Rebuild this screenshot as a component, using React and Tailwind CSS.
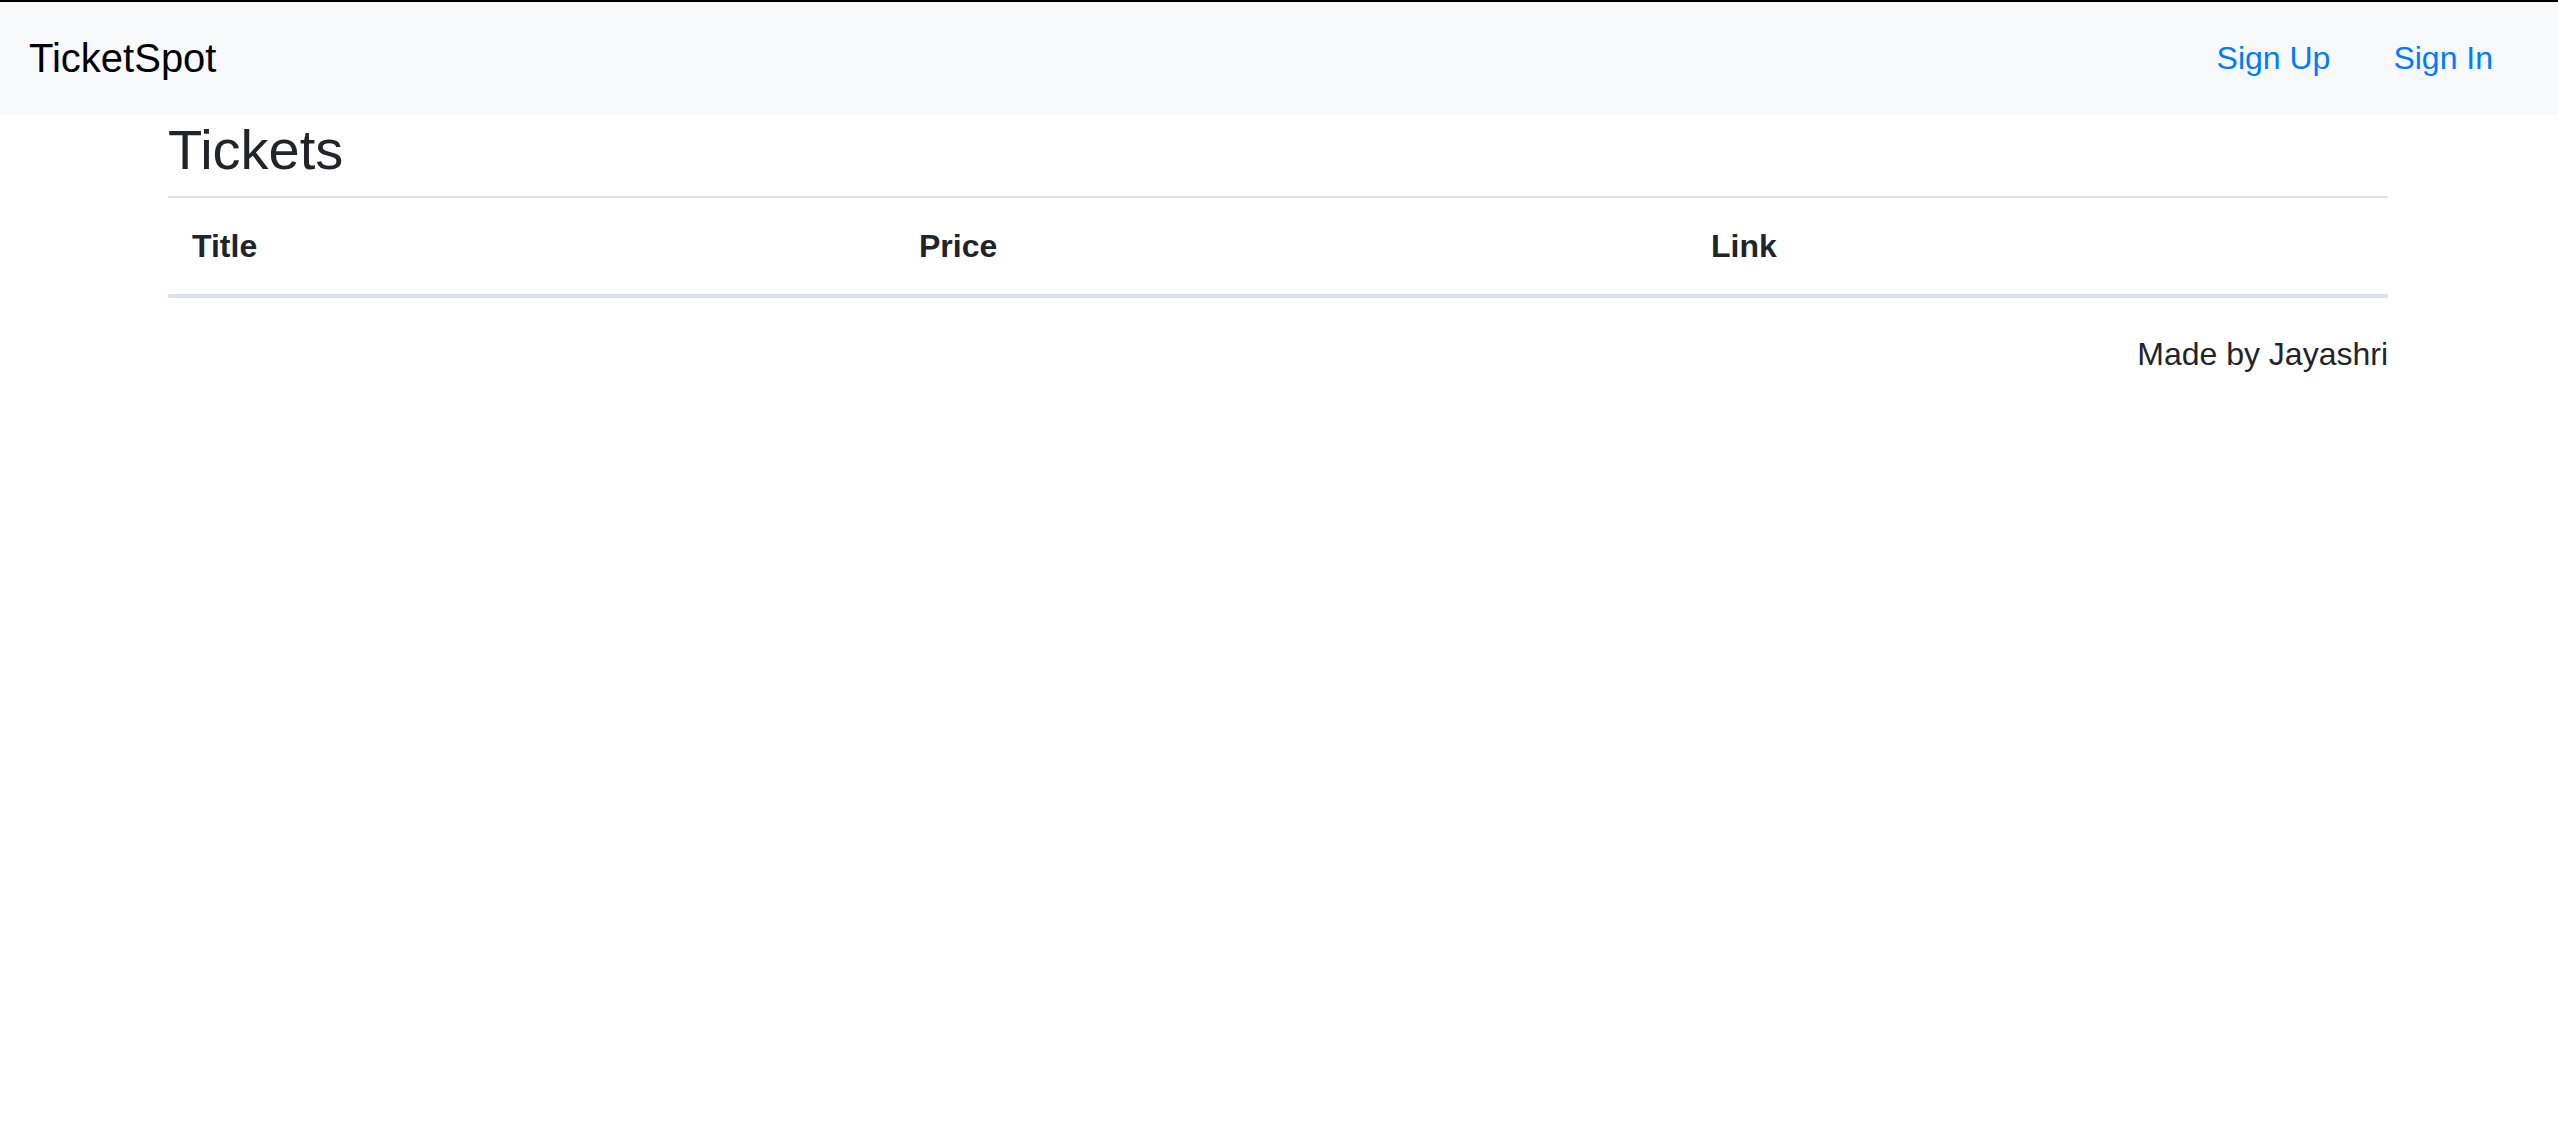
const font = { fontFamily: '"Liberation Sans", Arial, sans-serif' };

function Navbar() {
  return (
    <nav className="flex items-center justify-between bg-[#f8f9fa] h-[112px] pl-[29px] pr-[65px]">
      <a href="#" className="text-[40px] leading-[60px] text-black">
        TicketSpot
      </a>
      <ul className="flex items-center gap-[63px]">
        <li>
          <a href="#" className="text-[32px] leading-[48px] text-[#007bff]">
            Sign Up
          </a>
        </li>
        <li>
          <a href="#" className="text-[32px] leading-[48px] text-[#007bff]">
            Sign In
          </a>
        </li>
      </ul>
    </nav>
  );
}

function TicketTable() {
  return (
    <table className="w-full border-collapse mb-[32px]">
      <thead>
        <tr className="border-t-2 border-b-4 border-[#dee2e6]">
          <th className="w-[727px] text-left font-bold text-[32px] leading-[48px] p-[24px]">Title</th>
          <th className="w-[792px] text-left font-bold text-[32px] leading-[48px] p-[24px]">Price</th>
          <th className="text-left font-bold text-[32px] leading-[48px] p-[24px]">Link</th>
        </tr>
      </thead>
      <tbody></tbody>
    </table>
  );
}

export default function App() {
  return (
    <div className="min-h-[1134px] bg-white text-[#212529]" style={font}>
      <div className="h-[2px] bg-black"></div>
      <Navbar />
      <main className="w-[2280px] mx-auto px-[30px] -translate-x-[1px]">
        <h3 className="text-[56px] leading-[67px] font-normal mt-[2px] mb-[13px]">Tickets</h3>
        <TicketTable />
        <p className="text-right text-[32px] leading-[48px]">Made by Jayashri</p>
      </main>
    </div>
  );
}
